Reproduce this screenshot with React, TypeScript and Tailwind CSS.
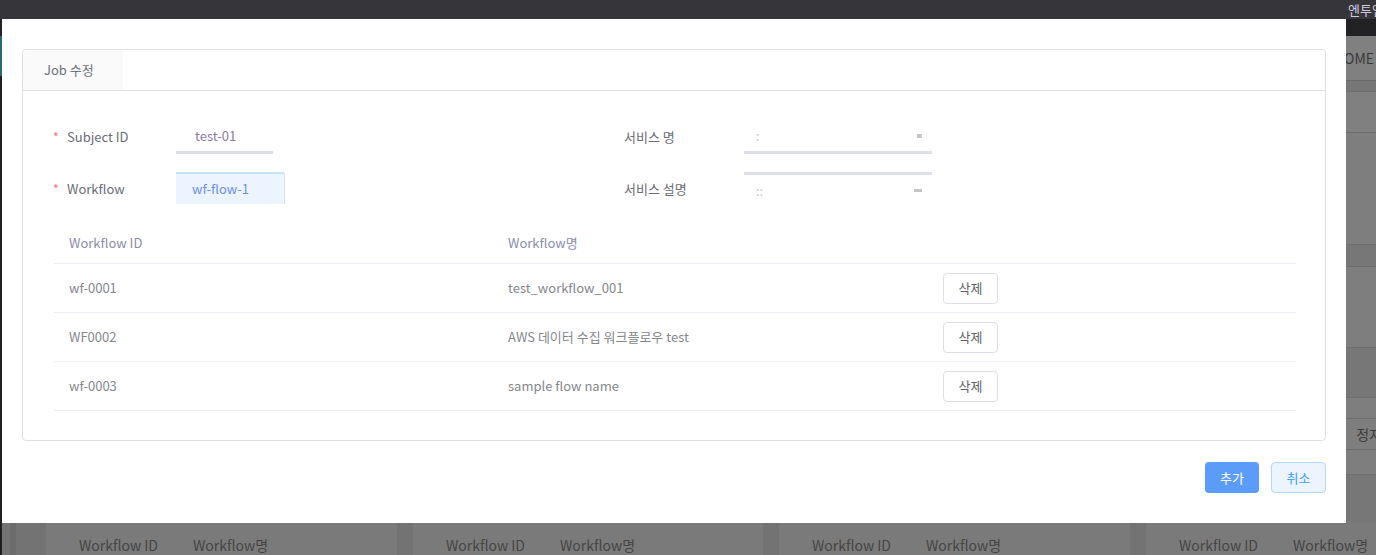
import React from "react";

const rows = [
  { id: "wf-0001", name: "test_workflow_001" },
  { id: "WF0002", name: "AWS 데이터 수집 워크플로우 test" },
  { id: "wf-0003", name: "sample flow name" },
];

function BgCard({ w }: { w: string }) {
  return (
    <div className={`${w} shrink-0 h-full bg-[#7a7a7a] flex items-start pt-[13px] text-[14px] text-[#454545]`}>
      <span className="ml-[33px] w-[114px]">Workflow ID</span>
      <span>Workflow명</span>
    </div>
  );
}

export default function App() {
  return (
    <div className="relative w-[1376px] h-[555px] overflow-hidden bg-[#767676] font-['Noto_Sans_CJK_KR','Noto_Sans',sans-serif]">
      {/* underlying page (dimmed) */}
      <div className="flex flex-col h-full">
        <div className="h-[19px] shrink-0 bg-[#36353a] flex items-center justify-end text-[13px] text-[#cfc9e0] leading-none overflow-hidden">
          <span className="mr-[-8px] whitespace-nowrap">엔투엠</span>
        </div>
        <div className="h-[17px] shrink-0 bg-[#222225]" />
        <div className="flex flex-1 min-h-0">
          <div className="w-[2px] shrink-0 bg-[#1f1f22] flex flex-col">
            <div className="h-[40px] bg-[#2a6870]" />
          </div>
          <div className="flex-1 flex flex-col min-w-0">
            <div className="h-[45px] shrink-0 bg-[#808080] border-b border-[#6b6b6b] flex items-center justify-end text-[14px] text-[#3a3a3a]">
              <span className="mr-[2px]">HOME</span>
            </div>
            <div className="h-[11px] shrink-0 bg-[#777] border-b border-[#6e6e6e]" />
            <div className="h-[41px] shrink-0 bg-[#808080] border-b border-[#6e6e6e]" />
            <div className="h-[112px] shrink-0 bg-[#7e7e7e] border-b border-[#6e6e6e]" />
            <div className="h-[22px] shrink-0 bg-[#777] border-b border-[#6e6e6e]" />
            <div className="h-[81px] shrink-0 bg-[#7e7e7e] border-b border-[#6e6e6e]" />
            <div className="h-[50px] shrink-0 bg-[#777] border-b border-[#6e6e6e]" />
            <div className="h-[21px] shrink-0 bg-[#7e7e7e] border-b border-[#6e6e6e]" />
            <div className="h-[31px] shrink-0 bg-[#7e7e7e] border-b border-[#6e6e6e] flex items-center justify-end text-[14px] text-[#3a3a3a]">
              <span className="mr-[-6px]">정지</span>
            </div>
            <div className="h-[25px] shrink-0 bg-[#7e7e7e] border-b border-[#6e6e6e]" />
            <div className="h-[47px] shrink-0 bg-[#777]" />
            <div className="flex-1 flex gap-[16px] bg-[#737373] pl-[8px]">
              <div className="w-[6px] shrink-0 bg-[#6c6c6c] mr-[14px]" />
              <BgCard w="w-[351px]" />
              <BgCard w="w-[350px]" />
              <BgCard w="w-[351px]" />
              <BgCard w="w-[300px]" />
            </div>
          </div>
        </div>
      </div>

      {/* modal dialog */}
      <div className="absolute left-[2px] top-[19px] w-[1344px] h-[504px] bg-white flex flex-col px-[20px] pt-[30px] text-[13px]">
        <div className="h-[392px] border border-[#e0e0e0] rounded-[4px] flex flex-col">
          <div className="h-[41px] shrink-0 border-b border-[#e0e0e0] flex">
            <div className="w-[100px] h-full bg-[#fafafa] rounded-tl-[4px] flex items-center pl-[21px] text-[#6f737d] whitespace-nowrap">
              Job 수정
            </div>
          </div>
          <div className="flex-1 flex flex-col pt-[29px] px-[30px]">
            {/* form row 1 */}
            <div className="flex h-[34px]">
              <div className="w-[571px] flex items-center">
                <span className="w-[14px] text-[#f56c6c] text-[12px]">*</span>
                <span className="w-[109px] text-[#6a6d75]">Subject ID</span>
                <div className="w-[97px] h-full border-b-[3px] border-[#dcdfe6] flex items-center pl-[19px] text-[#8e79ad]">
                  test-01
                </div>
              </div>
              <div className="flex items-center">
                <span className="w-[120px] text-[#6a6d75]">서비스 명</span>
                <div className="w-[188px] h-full border-b-[3px] border-[#dde0e6] flex items-center justify-between pl-[12px] pr-[10px] text-[#c9c2b8]">
                  <span>:</span>
                  <span className="w-[5px] h-[4px] bg-[#c5c6cc]" />
                </div>
              </div>
            </div>
            {/* form row 2 */}
            <div className="flex h-[34px] mt-[18px]">
              <div className="w-[571px] flex items-center">
                <span className="w-[14px] text-[#f56c6c] text-[12px]">*</span>
                <span className="w-[109px] text-[#6a6d75]">Workflow</span>
                <div className="w-[109px] h-[32px] self-start bg-[#ecf5ff] border-t-[2px] border-r border-[#c6e2ff] rounded-tr-[3px] flex items-center pl-[16px] text-[#6b8ef0]">
                  wf-flow-1
                </div>
              </div>
              <div className="flex items-center">
                <span className="w-[120px] text-[#6a6d75]">서비스 설명</span>
                <div className="w-[188px] h-full border-t-[3px] border-[#dde0e6] flex items-center justify-between pl-[12px] pr-[10px] text-[#c9c2b8]">
                  <span>::</span>
                  <span className="w-[8px] h-[3px] bg-[#c5c6cc]" />
                </div>
              </div>
            </div>
            {/* table */}
            <div className="mt-[16px] w-[1242px] ml-[1px]">
              <div className="flex h-[42px] items-center border-b border-[#ebeef5] text-[#8a8ea8]">
                <div className="w-[439px] pl-[15px]">Workflow ID</div>
                <div className="w-[435px] pl-[15px]">Workflow명</div>
                <div className="flex-1" />
              </div>
              {rows.map((r) => (
                <div key={r.id} className="flex h-[49px] items-center border-b border-[#ebeef5] text-[#85878d]">
                  <div className="w-[439px] pl-[15px]">{r.id}</div>
                  <div className="w-[435px] pl-[15px] whitespace-nowrap">{r.name}</div>
                  <div className="flex-1 pl-[15px]">
                    <button className="w-[55px] h-[31px] border border-[#dcdfe6] rounded-[4px] bg-white text-[13px] text-[#606266] flex items-center justify-center">
                      삭제
                    </button>
                  </div>
                </div>
              ))}
            </div>
          </div>
        </div>
        <div className="flex justify-end gap-[12px] mt-[21px]">
          <button className="w-[54px] h-[31px] rounded-[4px] bg-[#5a9cf8] text-white text-[13px] flex items-center justify-center">
            추가
          </button>
          <button className="w-[55px] h-[31px] rounded-[4px] bg-[#ecf5ff] border border-[#b3d8ff] text-[#409eff] text-[13px] flex items-center justify-center">
            취소
          </button>
        </div>
      </div>
    </div>
  );
}
